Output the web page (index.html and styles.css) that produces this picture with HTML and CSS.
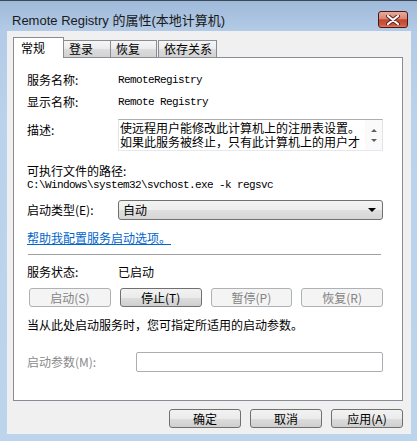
FILE: index.html
```html
<!DOCTYPE html>
<html lang="zh-CN">
<head>
    <meta charset="UTF-8">
    <meta name="viewport" content="width=device-width, initial-scale=1.0">
    <title>Remote Registry 的属性(本地计算机)</title>
    <link rel="stylesheet" href="styles.css">
</head>
<body>
    <div class="window">
        <div class="titlebar">
            <span class="title">Remote Registry 的属性(本地计算机)</span>
            <button class="close">
                <svg width="14" height="10" viewBox="0 0 14 10">
                    <path d="M2 1 L12 9 M12 1 L2 9" stroke="#5a1f1f" stroke-width="4" stroke-linecap="round"/>
                    <path d="M2 1 L12 9 M12 1 L2 9" stroke="#fff" stroke-width="2.2" stroke-linecap="round"/>
                </svg>
            </button>
        </div>

        <div class="client">
            <div class="tabs">
                <div class="tab active">常规</div>
                <div class="tab">登录</div>
                <div class="tab">恢复</div>
                <div class="tab">依存关系</div>
            </div>

            <div class="pane">
                <div class="row row-name">
                    <span class="label">服务名称:</span>
                    <span class="mono">RemoteRegistry</span>
                </div>
                <div class="row row-display">
                    <span class="label">显示名称:</span>
                    <span class="mono">Remote Registry</span>
                </div>
                <div class="row row-desc">
                    <span class="label">描述:</span>
                    <div class="textbox">
                        <div class="textbox-text">使远程用户能修改此计算机上的注册表设置。<br>如果此服务被终止，只有此计算机上的用户才</div>
                        <div class="scrollbar">
                            <span class="arrow-up"></span>
                            <span class="arrow-down"></span>
                        </div>
                    </div>
                </div>
                <div class="path-label">可执行文件的路径:</div>
                <div class="path mono">C:\Windows\system32\svchost.exe -k regsvc</div>
                <div class="row row-type">
                    <span class="label">启动类型(E):</span>
                    <div class="select">
                        <span>自动</span>
                        <span class="select-arrow"></span>
                    </div>
                </div>
                <a class="help-link" href="#">帮助我配置服务启动选项。</a>
                <div class="separator"></div>
                <div class="row row-status">
                    <span class="label">服务状态:</span>
                    <span>已启动</span>
                </div>
                <div class="service-buttons">
                    <button class="btn" disabled>启动(S)</button>
                    <button class="btn">停止(T)</button>
                    <button class="btn" disabled>暂停(P)</button>
                    <button class="btn" disabled>恢复(R)</button>
                </div>
                <div class="hint">当从此处启动服务时，您可指定所适用的启动参数。</div>
                <div class="row row-param">
                    <span class="label disabled-label">启动参数(M):</span>
                    <div class="input"></div>
                </div>
            </div>

            <div class="footer">
                <button class="btn">确定</button>
                <button class="btn">取消</button>
                <button class="btn">应用(A)</button>
            </div>
        </div>
    </div>
</body>
</html>
```

FILE: styles.css
```css
* {
    margin: 0;
    padding: 0;
    box-sizing: border-box;
}

body {
    width: 417px;
    height: 441px;
    overflow: hidden;
    font-family: "Noto Sans CJK SC", "Noto Sans", sans-serif;
    font-size: 12px;
    color: #000;
}

.window {
    height: 441px;
    background: linear-gradient(#9fb9d9 0px, #b3cbe6 30px, #bad2eb 120px, #bcd4ec 100%);
    border-top: 1px solid #3e4a58;
}

.titlebar {
    height: 30px;
    display: flex;
    align-items: flex-start;
    justify-content: space-between;
    padding: 0 9px 0 12px;
}

.title {
    margin-top: 11px;
    font-family: "Liberation Sans", "Noto Sans CJK SC", sans-serif;
    font-size: 13px;
    line-height: 17px;
    color: #1a1a1a;
}

.close {
    margin-top: 10px;
    width: 30px;
    height: 17px;
    border: 1px solid #4a1515;
    border-radius: 3px;
    background: linear-gradient(#e9aa9b 0%, #d98670 45%, #c0462f 52%, #cf5740 85%, #e07a5e 100%);
    display: flex;
    align-items: center;
    justify-content: center;
}

.client {
    height: 403px;
    margin: 0 6px 0 7px;
    background: #f0f0f0;
    padding: 6px 8px 0 6px;
}

/* tabs */
.tabs {
    height: 20px;
    display: flex;
    align-items: flex-end;
}

.tab {
    height: 17px;
    border: 1px solid #898c95;
    border-bottom: none;
    background: linear-gradient(#f6f6f6 0%, #ebebeb 50%, #dcdcdc 51%, #d2d2d2 100%);
    padding: 0 4px 0 5px;
    line-height: 16px;
    margin-left: -1px;
    white-space: nowrap;
}

.tab:nth-child(2) { width: 48px; }
.tab:nth-child(3) { width: 47px; }
.tab:nth-child(4) { width: 59px; margin-left: 1px; }

.tab.active {
    position: relative;
    z-index: 1;
    width: 51px;
    height: 21px;
    margin-left: 0;
    margin-bottom: -1px;
    background: #fff;
    padding-left: 7px;
    line-height: 20px;
}

.pane {
    height: 344px;
    border: 1px solid #898c95;
    background: #fff;
    padding: 14px 19px 0 13px;
}

.row {
    display: flex;
    align-items: center;
    line-height: 16px;
}

.label {
    width: 91px;
    flex-shrink: 0;
}

.mono {
    font-family: "Liberation Mono", monospace;
    font-size: 11px;
    letter-spacing: -0.6px;
}

.row-name { height: 16px; }
.row-display { height: 16px; margin-top: 6px; }

.row-desc {
    margin-top: 9px;
    align-items: flex-start;
}

.row-desc .label { margin-top: 3px; }

.textbox {
    width: 265px;
    height: 32px;
    border: 1px solid #abadb3;
    border-color: #abadb3 #e2e3ea #e3e9ef #e2e3ea;
    display: flex;
    overflow: hidden;
}

.textbox-text {
    flex: 1;
    line-height: 14px;
    padding: 1px 0 0 1px;
    white-space: nowrap;
    overflow: hidden;
}

.scrollbar {
    width: 17px;
    display: flex;
    flex-direction: column;
    align-items: center;
    justify-content: space-between;
    padding: 9px 0 8px;
    background: #fafafa;
}

.arrow-up, .arrow-down {
    width: 0;
    height: 0;
    border-left: 3px solid transparent;
    border-right: 3px solid transparent;
}

.arrow-up { border-bottom: 3px solid #606060; }
.arrow-down { border-top: 3px solid #606060; }

.path-label {
    margin-top: 12px;
    line-height: 15px;
}

.path {
    line-height: 15px;
}

.row-type { margin-top: 7px; }

.select {
    width: 267px;
    height: 20px;
    border: 1px solid #707070;
    border-radius: 3px;
    background: linear-gradient(#f3f3f3 0%, #ececec 50%, #dfdfdf 51%, #d6d6d6 100%);
    display: flex;
    align-items: center;
    justify-content: space-between;
    padding: 0 6px 0 4px;
    line-height: 16px;
}

.select-arrow {
    width: 0;
    height: 0;
    border-left: 4px solid transparent;
    border-right: 4px solid transparent;
    border-top: 4px solid #000;
}

.help-link {
    display: inline-block;
    margin-top: 10px;
    line-height: 16px;
    color: #0066cc;
    text-decoration: underline;
}

.separator {
    margin: 8px 0 0 1px;
    width: 353px;
    height: 1px;
    background: #a0a0a0;
}

.row-status { margin-top: 9px; }

.service-buttons {
    margin: 8px 0 0 2px;
    width: 354px;
    display: grid;
    grid-template-columns: repeat(4, 1fr);
    gap: 9px;
}

.btn {
    height: 19px;
    border: 1px solid #707070;
    border-radius: 3px;
    background: linear-gradient(#f2f2f2 0%, #ebebeb 50%, #dddddd 51%, #cfcfcf 100%);
    font-family: "Noto Sans CJK SC", sans-serif;
    font-size: 12px;
    line-height: 16px;
    color: #000;
}

.btn:disabled {
    border-color: #adb2b5;
    background: #f4f4f4;
    color: #838383;
}

.hint {
    margin-top: 10px;
    line-height: 16px;
}

.row-param { margin-top: 19px; }

.row-param .label { width: 109px; }

.disabled-label { color: #8a8a8a; }

.input {
    width: 248px;
    height: 20px;
    border: 1px solid #abadb3;
    border-radius: 2px;
    background: #fff;
}

.footer {
    margin-top: 8px;
    display: flex;
    justify-content: flex-end;
    gap: 9px;
}

.footer .btn {
    width: 72px;
}
```
